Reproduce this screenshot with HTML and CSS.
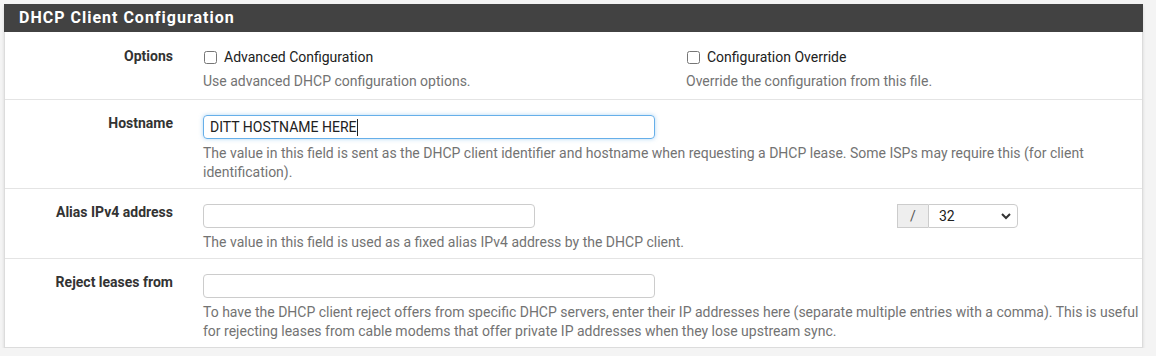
FILE: index.html
```html
<!DOCTYPE html>
<html lang="en">
<head>
    <meta charset="UTF-8">
    <title>DHCP Client Configuration</title>
    <link rel="stylesheet" href="styles.css">
</head>
<body>
    <div class="panel">
        <div class="panel-heading">DHCP Client Configuration</div>

        <div class="form-row options-row">
            <div class="row-label">Options</div>
            <div class="row-body">
                <div class="option-col">
                    <label class="check"><input type="checkbox"> Advanced Configuration</label>
                    <div class="help">Use advanced DHCP configuration options.</div>
                </div>
                <div class="option-col">
                    <label class="check"><input type="checkbox"> Configuration Override</label>
                    <div class="help">Override the configuration from this file.</div>
                </div>
            </div>
        </div>

        <div class="form-row">
            <div class="row-label">Hostname</div>
            <div class="row-body stack">
                <div class="fake-input focused">DITT HOSTNAME HERE<span class="caret"></span></div>
                <div class="help wide">The value in this field is sent as the DHCP client identifier and hostname when requesting a DHCP lease. Some ISPs may require this (for client identification).</div>
            </div>
        </div>

        <div class="form-row">
            <div class="row-label">Alias IPv4 address</div>
            <div class="row-body stack">
                <div class="alias-line">
                    <input type="text" class="text-input short">
                    <div class="mask-group">
                        <span class="addon">/</span>
                        <div class="select-wrap">
                            <select class="mask-select">
                                <option>32</option>
                            </select>
                            <svg class="chevron" width="10" height="8" viewBox="0 0 10 8"><path d="M1 2l4 4 4-4" fill="none" stroke="#333" stroke-width="2"/></svg>
                        </div>
                    </div>
                </div>
                <div class="help">The value in this field is used as a fixed alias IPv4 address by the DHCP client.</div>
            </div>
        </div>

        <div class="form-row">
            <div class="row-label">Reject leases from</div>
            <div class="row-body stack">
                <input type="text" class="text-input">
                <div class="help wide">To have the DHCP client reject offers from specific DHCP servers, enter their IP addresses here (separate multiple entries with a comma). This is useful for rejecting leases from cable modems that offer private IP addresses when they lose upstream sync.</div>
            </div>
        </div>
    </div>
</body>
</html>
```

FILE: styles.css
```css
body {
    margin: 0;
    padding: 4px 13px 0 4px;
    background-color: #f4f4f4;
    font-family: Roboto, "Liberation Sans", sans-serif;
    font-size: 14px;
    color: #212121;
}
.panel {
    background-color: white;
    border: 1px solid #dcdcdc;
    border-top: none;
    box-shadow: 0 2px 3px rgba(0, 0, 0, 0.12);
}
.panel-heading {
    background-color: #424242;
    color: white;
    font-size: 16px;
    font-weight: bold;
    letter-spacing: 1px;
    height: 28px;
    line-height: 28px;
    padding-left: 15px;
    margin: 0 -1px;
}
.form-row {
    display: flex;
    border-bottom: 1px solid #e4e4e4;
}
.form-row:last-child {
    border-bottom: none;
}
.row-label {
    width: 168px;
    padding: 13px 15px 0 0;
    text-align: right;
    font-weight: bold;
    font-size: 14px;
    line-height: 20px;
    color: #333;
    flex-shrink: 0;
}
.row-body {
    display: flex;
    padding: 15px 0 0 15px;
}
.options-row .row-label {
    padding-top: 14px;
}
.options-row .help {
    margin-bottom: 8px;
}
.stack {
    flex-direction: column;
    align-items: flex-start;
}
.option-col {
    width: 468px;
    padding-right: 15px;
}
.check {
    display: flex;
    align-items: center;
    height: 20px;
    color: #212121;
}
.check input {
    margin: 0 7px 0 1px;
    width: 13px;
    height: 13px;
}
.help {
    color: #737373;
    font-size: 14px;
    line-height: 19px;
    margin: 5px 0 6px;
}
.wide {
    width: 940px;
}
.text-input,
.fake-input {
    box-sizing: border-box;
    width: 452px;
    height: 24px;
    border: 1px solid #ccc;
    border-radius: 4px;
    padding: 0 6px;
    font-family: inherit;
    font-size: 14px;
    color: #212121;
    margin: 0;
}
.fake-input {
    display: flex;
    align-items: center;
}
.focused {
    border-color: #66afe9;
    box-shadow: 0 0 4px rgba(102, 175, 233, 0.5);
}
.caret {
    display: inline-block;
    width: 1px;
    height: 17px;
    background-color: #222;
}
.alias-line {
    display: flex;
    width: 815px;
    justify-content: space-between;
}
.short {
    width: 332px;
}
.mask-group {
    display: flex;
    height: 24px;
}
.addon {
    box-sizing: border-box;
    width: 31px;
    border: 1px solid #ccc;
    border-right: none;
    background-color: #eee;
    color: #555;
    font-size: 14px;
    line-height: 22px;
    text-align: center;
}
.select-wrap {
    position: relative;
}
.mask-select {
    appearance: none;
    box-sizing: border-box;
    width: 90px;
    height: 24px;
    border: 1px solid #ccc;
    border-radius: 0 4px 4px 0;
    background-color: white;
    padding: 0 10px;
    font-family: inherit;
    font-size: 14px;
    color: #212121;
}
.chevron {
    position: absolute;
    right: 7px;
    top: 8px;
}
```
